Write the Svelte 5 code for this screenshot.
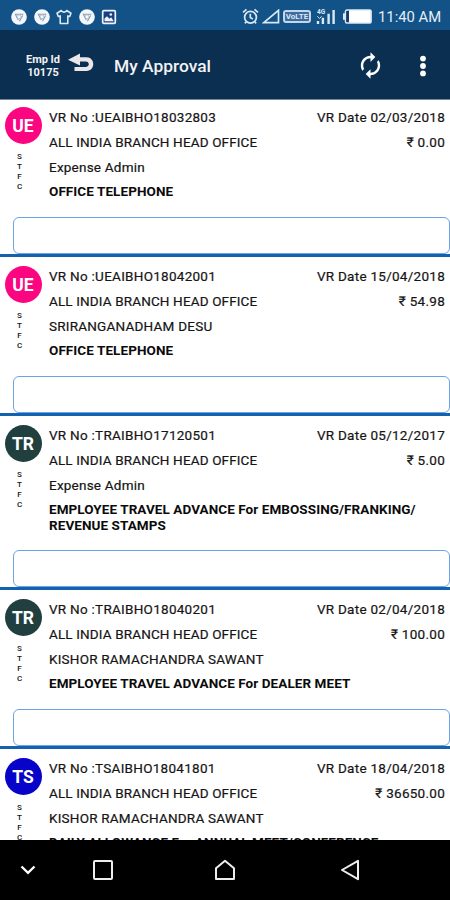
<script>
    const office = "ALL INDIA BRANCH HEAD OFFICE";

    const vouchers = [
        {
            type: "UE",
            color: "#fc0580",
            number: "UEAIBHO18032803",
            date: "02/03/2018",
            amount: "0.00",
            person: "Expense Admin",
            lines: ["OFFICE TELEPHONE"],
        },
        {
            type: "UE",
            color: "#fc0580",
            number: "UEAIBHO18042001",
            date: "15/04/2018",
            amount: "54.98",
            person: "SRIRANGANADHAM DESU",
            lines: ["OFFICE TELEPHONE"],
        },
        {
            type: "TR",
            color: "#213f3f",
            number: "TRAIBHO17120501",
            date: "05/12/2017",
            amount: "5.00",
            person: "Expense Admin",
            lines: [
                "EMPLOYEE TRAVEL ADVANCE For EMBOSSING/FRANKING/",
                "REVENUE STAMPS",
            ],
        },
        {
            type: "TR",
            color: "#213f3f",
            number: "TRAIBHO18040201",
            date: "02/04/2018",
            amount: "100.00",
            person: "KISHOR RAMACHANDRA SAWANT",
            lines: ["EMPLOYEE TRAVEL ADVANCE For DEALER MEET"],
        },
        {
            type: "TS",
            color: "#0703c9",
            number: "TSAIBHO18041801",
            date: "18/04/2018",
            amount: "36650.00",
            person: "KISHOR RAMACHANDRA SAWANT",
            lines: ["DAILY ALLOWANCE For ANNUAL MEET/CONFERENCE"],
        },
    ];
</script>

{#snippet chrome()}
    <svg width="16" height="16" viewBox="0 0 16 16">
        <circle cx="8" cy="8" r="7.8" fill="#f4f8fc" />
        <path
            d="M3.8 5.3h8.6M4.6 5.8 7.3 11M11.6 6.4 8.4 12.2"
            stroke="#8499ad"
            stroke-width="1.1"
            fill="none" />
        <circle cx="8" cy="7.8" r="2" fill="#f4f8fc" stroke="#a3b5c5" stroke-width="0.8" />
    </svg>
{/snippet}

<div class="screen">
    <div class="status">
        <div class="notices">
            {@render chrome()}
            {@render chrome()}
            <svg width="16" height="16" viewBox="0 0 16 16">
                <path
                    d="M5.3 1.5C6 3.6 10 3.6 10.7 1.5L15 4.2l-1.3 3.3-1.9-.6v7.6H4.2V6.9l-1.9.6L1 4.2z"
                    fill="none"
                    stroke="#d9e8f5"
                    stroke-width="1.6"
                    stroke-linejoin="round" />
            </svg>
            {@render chrome()}
            <svg width="16" height="16" viewBox="0 0 16 16">
                <rect x="1.7" y="1.7" width="12.6" height="12.6" rx="1" fill="#1a3f86" stroke="#eef4fa" stroke-width="1.7" />
                <path d="M3.5 12.3V9.5L6 7.3l2.4 2.4 1.7-1.4 2.7 4z" fill="#eef4fa" />
                <circle cx="9.8" cy="5.5" r="1.3" fill="#eef4fa" />
            </svg>
        </div>
        <div class="signals">
            <svg width="17" height="17" viewBox="0 0 17 17" fill="none" stroke="#d9e8f5" stroke-width="1.7">
                <circle cx="8.5" cy="9.2" r="5.9" />
                <path d="M8.3 5.8v3.8l2.6 1.4M1 4.4l3.5-3M16 4.4l-3.5-3M4.2 13.8l-1.3 1.6M12.8 13.8l1.3 1.6" />
            </svg>
            <svg class="triangle" width="18" height="15" viewBox="0 0 18 15">
                <path d="M1.8 13.6 16.5 1.3v12.3z" fill="none" stroke="#d9e8f5" stroke-width="1.7" />
            </svg>
            <span class="volte">VoLTE</span>
            <svg class="bars" width="20" height="17" viewBox="0 0 20 17">
                <text x="1" y="5.5" class="network">4G</text>
                <path d="M2 16V13M6.9 16V9.8M12.6 16V5.7M17.6 16V2" stroke="#d9e8f5" stroke-width="2.4" />
                <path d="M1.3 8.3l2.3 2.2 2-2.2" stroke="#d9e8f5" fill="none" />
            </svg>
            <svg class="battery" width="30" height="15" viewBox="0 0 30 15">
                <path d="M3.2 4.3H1v6.5h2.2" fill="#d9e8f5" />
                <rect x="3.4" y="1" width="25.8" height="13" rx="1.5" fill="#173b70" stroke="#d9e8f5" stroke-width="1.4" />
                <rect x="7" y="1.2" width="21.8" height="12.6" rx="1" fill="#fff" />
            </svg>
            <span class="clock">11:40 AM</span>
        </div>
    </div>

    <header>
        <div class="employee">Emp Id<br />10175</div>
        <svg class="back" width="28" height="22" viewBox="0 0 28 22">
            <path d="M1 7.7 13 1.5v3.7h6.5c9 0 9 13.8 0 13.8H7.5v-4.1h11c4.4 0 4.4-5.4 0-5.4H13v4z" fill="#e9e7ea" />
        </svg>
        <h1>My Approval</h1>
        <svg class="sync" width="29" height="29" viewBox="0 0 24 24">
            <path
                d="M12 4V1L8 5l4 4V6c3.31 0 6 2.69 6 6 0 1.01-.25 1.97-.7 2.8l1.46 1.46C19.54 15.03 20 13.57 20 12c0-4.42-3.58-8-8-8zm0 14c-3.31 0-6-2.69-6-6 0-1.01.25-1.97.7-2.8L5.24 7.74C4.46 8.97 4 10.43 4 12c0 4.42 3.58 8 8 8v3l4-4-4-4v3z"
                transform="matrix(-1 0 0 1 24 0)"
                fill="#fff" />
        </svg>
        <svg class="more" width="8" height="24" viewBox="0 0 8 24" fill="#fff">
            <circle cx="4" cy="4.6" r="2.9" />
            <circle cx="4" cy="12" r="2.9" />
            <circle cx="4" cy="19.4" r="2.9" />
        </svg>
    </header>

    <main>
        {#each vouchers as voucher}
            <article>
                <div class="details">
                    <div class="side">
                        <div class="avatar" style="background: {voucher.color}">{voucher.type}</div>
                        <div class="company">
                            {#each "STFC" as letter}
                                <span>{letter}</span>
                            {/each}
                        </div>
                    </div>
                    <div class="info">
                        <div class="row">
                            <span class="number">VR No :{voucher.number}</span>
                            <span class="date">VR Date {voucher.date}</span>
                        </div>
                        <div class="row">
                            <span class="office">{office}</span>
                            <span class="amount">₹ {voucher.amount}</span>
                        </div>
                        <div class="row"><span class="person">{voucher.person}</span></div>
                        <div class="purpose">
                            {#each voucher.lines as line}
                                <div><span>{line}</span></div>
                            {/each}
                        </div>
                    </div>
                </div>
                <div class="remark"></div>
            </article>
        {/each}
    </main>

    <nav>
        <svg width="18" height="12" viewBox="0 0 18 12">
            <path d="M2.5 2.5 9 8.8l6.5-6.3" fill="none" stroke="#fff" stroke-width="2.3" />
        </svg>
        <svg class="recent" width="22" height="22" viewBox="0 0 22 22">
            <rect x="2" y="2" width="18" height="18" rx="1" fill="none" stroke="#eee" stroke-width="2" />
        </svg>
        <svg class="home" width="22" height="22" viewBox="0 0 22 22">
            <path d="M2 9.2 11 1.8l9 7.4V20H2z" fill="none" stroke="#eee" stroke-width="2" stroke-linejoin="round" />
        </svg>
        <svg class="previous" width="20" height="22" viewBox="0 0 20 22">
            <path d="M2 11 18 1.8v18.4z" fill="none" stroke="#eee" stroke-width="2" stroke-linejoin="round" />
        </svg>
    </nav>
</div>

<style>
    .screen {
        display: flex;
        flex-direction: column;
        height: 900px;
        overflow: hidden;
        background: #fff;
        font-family: Roboto, sans-serif;
        color: #151515;
    }

    svg {
        display: block;
        flex: none;
    }

    .status {
        display: flex;
        flex: none;
        justify-content: space-between;
        height: 30px;
        padding: 3px 10px 0 11px;
        box-sizing: border-box;
        align-items: center;
        background: #125286;
    }

    .notices {
        display: flex;
        gap: 6.6px;
    }

    .signals {
        display: flex;
        align-items: center;
    }

    .triangle {
        margin-left: 3px;
    }

    .volte {
        width: 28px;
        height: 13px;
        margin-left: 3px;
        box-sizing: border-box;
        border: 2px solid #c2d7e9;
        border-radius: 3px;
        background: #3f6b9e;
        color: #d9e8f5;
        font-size: 8px;
        font-weight: 700;
        line-height: 10px;
        text-align: center;
    }

    .bars {
        margin-left: 5px;
    }

    .network {
        font-size: 6.5px;
        font-weight: 700;
        fill: #d9e8f5;
    }

    .battery {
        margin-left: 6px;
    }

    .clock {
        width: 62px;
        margin-left: 6px;
        color: #e3eef8;
        font-size: 14.8px;
        white-space: nowrap;
    }

    header {
        display: flex;
        flex: none;
        align-items: center;
        height: 70px;
        background: #0a2f50;
        border-bottom: 1px solid #75869a;
        box-sizing: border-box;
        color: #f2f2f4;
    }

    .employee {
        width: 36px;
        margin: 2px 0 0 25px;
        font-size: 11px;
        font-weight: 700;
        line-height: 13px;
        text-align: center;
        white-space: nowrap;
    }

    .back {
        margin: -3px 0 0 6px;
    }

    h1 {
        margin: 3px 0 0 19px;
        font-size: 17.4px;
        font-weight: 500;
    }

    .sync {
        margin: 2px 0 0 auto;
    }

    .more {
        margin: 2px 23px 0 34px;
    }

    main {
        flex: 1;
        min-height: 0;
        overflow: hidden;
        font-size: 13.5px;
    }

    article {
        border-bottom: 3px solid #1262ad;
        margin-bottom: 0.75px;
    }

    article:first-child {
        margin-top: -1px;
    }

    .details {
        display: flex;
        padding: 5px 5px 12px 0;
    }

    .side {
        display: flex;
        flex: none;
        flex-direction: column;
        align-items: center;
        width: 38px;
        margin: 3px 7px 0 4px;
        height: 90px;
    }

    .avatar {
        width: 37px;
        height: 37px;
        border-radius: 50%;
        color: #fff;
        font-size: 17.5px;
        font-weight: 700;
        line-height: 38px;
        text-align: center;
    }

    .company {
        display: flex;
        flex-direction: column;
        margin: 8px 7px 0 0;
        font-size: 8px;
        font-weight: 500;
        line-height: 10px;
        text-align: center;
    }

    .info {
        flex: 1;
        min-width: 0;
        padding-top: 1px;
    }

    .row {
        display: flex;
        justify-content: space-between;
        height: 25px;
        line-height: 25px;
        white-space: nowrap;
        -webkit-text-stroke: 0.2px #151515;
    }

    .number,
    .date,
    .amount {
        letter-spacing: 0.27px;
    }

    .office {
        letter-spacing: 0.14px;
    }

    .person {
        letter-spacing: 0.22px;
    }

    .purpose {
        padding: 4.25px 0 5px;
        color: #0b0b0b;
        font-weight: 700;
        letter-spacing: 0.07px;
        line-height: 15.75px;
        white-space: nowrap;
    }

    .remark {
        height: 37px;
        margin-left: 13px;
        border: 1px solid #6ea3e2;
        border-radius: 6px;
        box-sizing: border-box;
    }

    nav {
        display: flex;
        flex: none;
        align-items: center;
        height: 60px;
        padding-left: 19px;
        background: #000;
    }

    .recent {
        margin-left: 55px;
    }

    .home {
        margin-left: 100px;
    }

    .previous {
        margin-left: 104px;
    }
</style>
